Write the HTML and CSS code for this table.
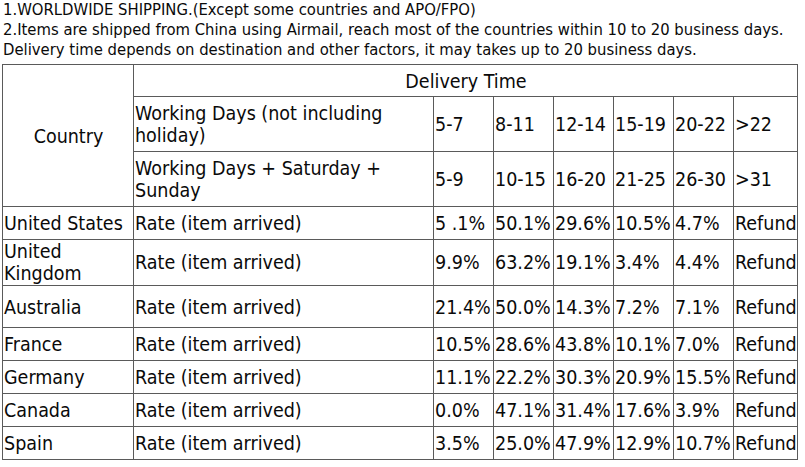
FILE: index.html
```html
<!DOCTYPE html>
<html>
<head>
<meta charset="utf-8">
<link rel="stylesheet" href="styles.css">
</head>
<body>
<div class="notes">
  <p>1.WORLDWIDE SHIPPING.(Except some countries and APO/FPO)</p>
  <p>2.Items are shipped from China using Airmail, reach most of the countries within 10 to 20 business days.</p>
  <p>Delivery time depends on destination and other factors, it may takes up to 20 business days.</p>
</div>
<table class="rates">
  <colgroup>
    <col class="c-country"><col class="c-label"><col class="c-n"><col class="c-n"><col class="c-n"><col class="c-n"><col class="c-n"><col class="c-last">
  </colgroup>
  <tr class="r-title">
    <td rowspan="3" class="center">Country</td>
    <td colspan="7" class="center">Delivery Time</td>
  </tr>
  <tr class="r-tall">
    <td>Working Days (not including holiday)</td>
    <td>5-7</td><td>8-11</td><td>12-14</td><td>15-19</td><td>20-22</td><td>&gt;22</td>
  </tr>
  <tr class="r-tall">
    <td>Working Days + Saturday + Sunday</td>
    <td>5-9</td><td>10-15</td><td>16-20</td><td>21-25</td><td>26-30</td><td>&gt;31</td>
  </tr>
  <tr class="r-std">
    <td>United States</td><td>Rate (item arrived)</td>
    <td>5 .1%</td><td>50.1%</td><td>29.6%</td><td>10.5%</td><td>4.7%</td><td>Refund</td>
  </tr>
  <tr class="r-uk">
    <td>United Kingdom</td><td>Rate (item arrived)</td>
    <td>9.9%</td><td>63.2%</td><td>19.1%</td><td>3.4%</td><td>4.4%</td><td>Refund</td>
  </tr>
  <tr class="r-au">
    <td>Australia</td><td>Rate (item arrived)</td>
    <td>21.4%</td><td>50.0%</td><td>14.3%</td><td>7.2%</td><td>7.1%</td><td>Refund</td>
  </tr>
  <tr class="r-std">
    <td>France</td><td>Rate (item arrived)</td>
    <td>10.5%</td><td>28.6%</td><td>43.8%</td><td>10.1%</td><td>7.0%</td><td>Refund</td>
  </tr>
  <tr class="r-std">
    <td>Germany</td><td>Rate (item arrived)</td>
    <td>11.1%</td><td>22.2%</td><td>30.3%</td><td>20.9%</td><td>15.5%</td><td>Refund</td>
  </tr>
  <tr class="r-std">
    <td>Canada</td><td>Rate (item arrived)</td>
    <td>0.0%</td><td>47.1%</td><td>31.4%</td><td>17.6%</td><td>3.9%</td><td>Refund</td>
  </tr>
  <tr class="r-std">
    <td>Spain</td><td>Rate (item arrived)</td>
    <td>3.5%</td><td>25.0%</td><td>47.9%</td><td>12.9%</td><td>10.7%</td><td>Refund</td>
  </tr>
</table>
</body>
</html>
```
FILE: styles.css
```css
html, body {
  margin: 0;
  padding: 0;
  background: #fff;
}
body {
  padding-left: 2px;
  font-family: "DejaVu Sans Condensed", "DejaVu Sans", sans-serif;
  font-stretch: condensed;
  color: #0a0a0a;
}
.notes {
  padding-left: 1px;
  font-size: 16.5px;
  line-height: 20px;
}
.notes p {
  margin: 0;
  white-space: nowrap;
}
.rates {
  margin-top: 4px;
  border-collapse: collapse;
  table-layout: fixed;
  width: 795px;
  font-size: 19.5px;
  line-height: 22px;
}
.c-country { width: 131px; }
.c-label { width: 300px; }
.c-n { width: 60px; }
.c-last { width: 64px; }
.rates td {
  border: 1px solid #5a5a5a;
  padding: 2px 0 0 1px;
  vertical-align: middle;
  text-align: left;
  white-space: normal;
  overflow: hidden;
}
.rates td.center {
  text-align: center;
}
.r-title { height: 32px; }
.r-tall { height: 55px; }
.r-std { height: 33px; }
.r-uk { height: 46px; }
.r-uk td { padding-top: 0; }
.r-au { height: 42px; }
```
